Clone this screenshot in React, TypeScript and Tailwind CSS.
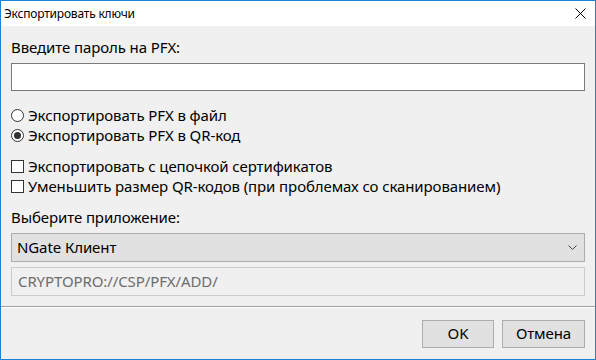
import React from "react";

const font = "font-['Noto_Sans',_'DejaVu_Sans',_sans-serif]";

function Radio({ checked, label }: { checked?: boolean; label: string }) {
  return (
    <label className="flex items-center h-[20px] text-[15px] text-black">
      <span className="w-[13px] h-[13px] rounded-full border border-[#333333] bg-white flex items-center justify-center">
        {checked && <span className="w-[7px] h-[7px] rounded-full bg-[#333333]" />}
      </span>
      <span className="ml-[4px] tracking-[-0.1px]">{label}</span>
    </label>
  );
}

function Check({ label }: { label: string }) {
  return (
    <label className="flex items-center h-[20px] text-[15px] text-black">
      <span className="w-[13px] h-[13px] border border-[#333333] bg-white" />
      <span className="ml-[4px] tracking-[-0.1px]">{label}</span>
    </label>
  );
}

export default function App() {
  return (
    <div className={`w-[596px] h-[360px] border border-[#1883d7] bg-[#f0f0f0] flex flex-col ${font}`}>
      <div className="h-[25px] bg-white flex items-center justify-between pl-[3px] pr-[9px]">
        <span className="text-[12px] text-black tracking-[-0.2px]">Экспортировать ключи</span>
        <svg width="11" height="11" viewBox="0 0 11 11">
          <path d="M0.5 0.5 L10.5 10.5 M10.5 0.5 L0.5 10.5" stroke="#000" strokeWidth="1" />
        </svg>
      </div>

      <div className="flex-1 px-[10px] pt-[11px]">
        <div className="text-[15px] leading-[20px] tracking-[-0.1px] text-black">Введите пароль на PFX:</div>
        <div className="mt-[6px] h-[28px] border border-[#7a7a7a] bg-white" />

        <div className="mt-[14px] flex flex-col">
          <Radio label="Экспортировать PFX в файл" />
          <Radio checked label="Экспортировать PFX в QR-код" />
        </div>

        <div className="mt-[11px] flex flex-col">
          <Check label="Экспортировать с цепочкой сертификатов" />
          <Check label="Уменьшить размер QR-кодов (при проблемах со сканированием)" />
        </div>

        <div className="mt-[11px] text-[15px] leading-[20px] tracking-[-0.1px] text-black">Выберите приложение:</div>
        <div className="mt-[6px] h-[29px] border border-[#adadad] bg-[#e1e1e1] flex items-center justify-between pl-[5px] pr-[7px]">
          <span className="text-[15px] tracking-[-0.1px] text-black">NGate Клиент</span>
          <svg width="9" height="5" viewBox="0 0 9 5">
            <path d="M0.5 0.5 L4.5 4.5 L8.5 0.5" stroke="#444" strokeWidth="1" fill="none" />
          </svg>
        </div>
        <div className="mt-[5px] h-[29px] border border-[#cccccc] bg-[#f0f0f0] flex items-center px-[6px]">
          <span className="text-[15px] tracking-[-0.1px] text-[#6d6d6d]">CRYPTOPRO://CSP/PFX/ADD/</span>
        </div>
      </div>

      <div className="border-t border-[#a0a0a0] border-b border-b-white" />
      <div className="h-[51px] flex items-center justify-end gap-[8px] pr-[10px]">
        <button className="w-[72px] h-[28px] border border-[#adadad] bg-[#e1e1e1] text-[15px] text-black">OK</button>
        <button className="w-[83px] h-[28px] border border-[#adadad] bg-[#e1e1e1] text-[15px] text-black tracking-[-0.1px]">Отмена</button>
      </div>
    </div>
  );
}
